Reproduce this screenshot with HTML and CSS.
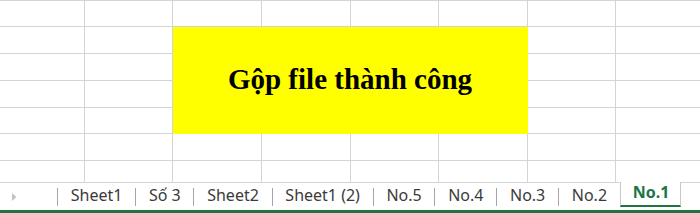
FILE: index.html
```html
<!DOCTYPE html>
<html lang="vi">
<head>
<meta charset="utf-8">
<title>Gộp file</title>
<link rel="stylesheet" href="styles.css">
</head>
<body>
<div class="sheet">
  <div class="cell"></div><div class="cell"></div><div class="cell"></div><div class="cell"></div><div class="cell"></div><div class="cell"></div><div class="cell"></div><div class="cell"></div>
  <div class="cell"></div><div class="cell"></div>
  <div class="cell merged">Gộp file thành công</div>
  <div class="cell"></div><div class="cell"></div>
  <div class="cell"></div><div class="cell"></div><div class="cell"></div><div class="cell"></div>
  <div class="cell"></div><div class="cell"></div><div class="cell"></div><div class="cell"></div>
  <div class="cell"></div><div class="cell"></div><div class="cell"></div><div class="cell"></div>
  <div class="cell"></div><div class="cell"></div><div class="cell"></div><div class="cell"></div><div class="cell"></div><div class="cell"></div><div class="cell"></div><div class="cell"></div>
  <div class="cell last"></div><div class="cell last"></div><div class="cell last"></div><div class="cell last"></div><div class="cell last"></div><div class="cell last"></div><div class="cell last"></div><div class="cell last"></div>
</div>
<div class="tabbar">
  <div class="nav">
    <svg class="arrow" width="5" height="8" viewBox="0 0 5 8"><path d="M0 0 L4.5 4 L0 8 Z" fill="#c4c4c4"/></svg>
  </div>
  <div class="tab">Sheet1</div>
  <div class="tab">Số 3</div>
  <div class="tab">Sheet2</div>
  <div class="tab">Sheet1 (2)</div>
  <div class="tab">No.5</div>
  <div class="tab">No.4</div>
  <div class="tab">No.3</div>
  <div class="tab">No.2</div>
  <div class="tab active">No.1</div>
</div>
</body>
</html>
```

FILE: styles.css
```css
html, body {
  margin: 0;
  padding: 0;
  background: #ffffff;
}
body {
  width: 700px;
  height: 213px;
  overflow: hidden;
}
.sheet {
  display: grid;
  grid-template-columns: 85px 88px 89px 89px 88px 89px 88px 89px;
  grid-template-rows: 26px 27px 27px 27px 26px 27px 21px;
  border-top: 1px solid #d4d4d4;
  width: 705px;
  overflow: hidden;
}
.cell {
  box-sizing: border-box;
  border-right: 1px solid #d4d4d4;
  border-bottom: 1px solid #d4d4d4;
}
.cell.last {
  border-bottom: none;
}
.merged {
  grid-column: 3 / 7;
  grid-row: 2 / 6;
  background: #ffff00;
  border-color: #ffff00;
  display: flex;
  align-items: center;
  justify-content: center;
  font-family: "Liberation Serif", "Times New Roman", serif;
  font-weight: bold;
  font-size: 29px;
  color: #000000;
  padding-bottom: 1px;
}
.tabbar {
  display: flex;
  align-items: center;
  height: 27px;
  border-top: 1px solid #d4d4d4;
  border-bottom: 3px solid #217346;
  background: #ffffff;
  font-family: "Noto Sans", "Open Sans", sans-serif;
  font-size: 16px;
  color: #3a3a3a;
}
.nav {
  width: 57px;
  height: 27px;
  display: flex;
  align-items: center;
  padding-left: 12px;
  box-sizing: border-box;
}
.arrow {
  display: block;
  margin-top: 1px;
}
.tab {
  box-sizing: border-box;
  height: 18px;
  line-height: 14px;
  padding: 0 12.75px;
  border-left: 1px solid #a6a6a6;
  white-space: nowrap;
}
.tab.active {
  align-self: flex-start;
  margin-top: -1px;
  height: 25px;
  line-height: 20px;
  padding: 0 11px 0 12px;
  border-left: 1px solid #c8c8c8;
  border-right: 1px solid #c8c8c8;
  border-bottom: 2px solid #217346;
  background: #ffffff;
  font-weight: bold;
  color: #217346;
}
```
